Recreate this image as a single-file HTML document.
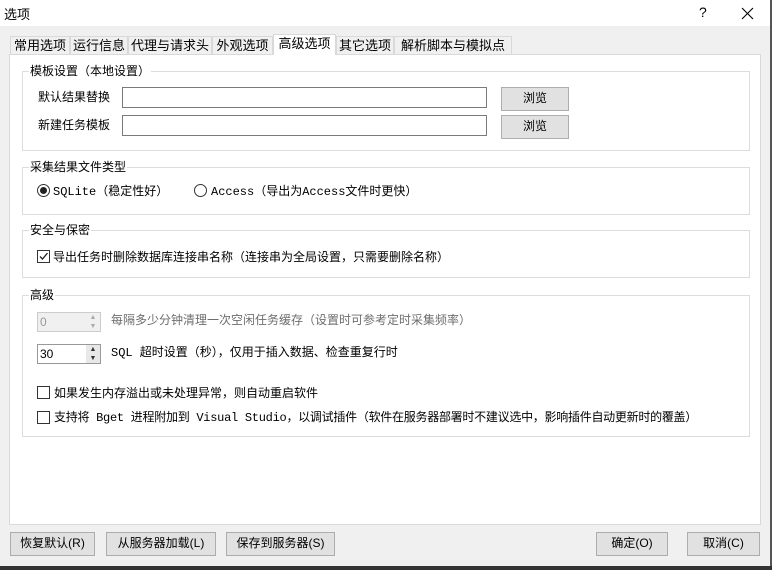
<!DOCTYPE html>
<html><head><meta charset="utf-8"><style>
*{box-sizing:border-box;margin:0;padding:0}
body{width:772px;height:570px;background:#f0f0f0;font-family:"Liberation Sans","Noto Sans CJK SC",sans-serif;font-size:12px;color:#000;position:relative;overflow:hidden}
.m{font-family:"Liberation Mono","Noto Sans CJK SC",monospace}
.a{position:absolute;white-space:nowrap}
.title{left:0;top:0;width:772px;height:26px;background:#fff}
.tab{position:absolute;top:36px;height:19px;border:1px solid #d9d9d9;border-bottom:none;background:#f0f0f0;font-size:13px;line-height:17px;text-align:center}
.tab.sel{top:34px;height:21px;background:#fff;z-index:2}
.panel{left:9px;top:54px;width:752px;height:471px;background:#fff;border:1px solid #d9d9d9}
.grp{position:absolute;border:1px solid #dcdcdc}
.lg{position:absolute;top:-9px;left:6px;background:#fff;padding:0 1px;line-height:16px;font-size:12px}
.inp{position:absolute;background:#fff;border:1px solid #7a7a7a}
.btn{position:absolute;background:#e1e1e1;border:1px solid #adadad;text-align:center;line-height:21px;font-size:12px}
.cb{position:absolute;width:13px;height:13px;border:1px solid #333;background:#fff}
</style></head><body>
<div class="a title"></div>
<div class="a" style="left:4px;top:4px;font-size:13px">选项</div>
<div class="a" style="left:699px;top:4px;font-size:14px">?</div>
<svg class="a" style="left:741px;top:7px" width="13" height="13"><path d="M1 1 L12 12 M12 1 L1 12" stroke="#000" stroke-width="1.1"/></svg>
<div class="a" style="left:770px;top:0;width:2px;height:570px;background:#555"></div>

<div class="tab" style="left:10px;width:60px">常用选项</div>
<div class="tab" style="left:70px;width:58px">运行信息</div>
<div class="tab" style="left:128px;width:84px">代理与请求头</div>
<div class="tab" style="left:212px;width:61px">外观选项</div>
<div class="tab sel" style="left:273px;width:63px">高级选项</div>
<div class="tab" style="left:336px;width:58px">其它选项</div>
<div class="tab" style="left:394px;width:118px">解析脚本与模拟点击</div>

<div class="a panel"></div>

<div class="grp" style="left:22px;top:71px;width:728px;height:80px"><div class="lg">模板设置（本地设置）</div></div>
<div class="a" style="left:38px;top:88px">默认结果替换</div>
<div class="inp" style="left:122px;top:87px;width:365px;height:21px"></div>
<div class="btn" style="left:501px;top:87px;width:68px;height:24px">浏览</div>
<div class="a" style="left:38px;top:116px">新建任务模板</div>
<div class="inp" style="left:122px;top:115px;width:365px;height:21px"></div>
<div class="btn" style="left:501px;top:115px;width:68px;height:24px">浏览</div>

<div class="grp" style="left:22px;top:167px;width:728px;height:48px"><div class="lg">采集结果文件类型</div></div>
<div class="a" style="left:37px;top:184px;width:13px;height:13px;border:1px solid #333;border-radius:50%;background:#fff"><div style="margin:2px;width:7px;height:7px;border-radius:50%;background:#222"></div></div>
<div class="a m" style="left:53px;top:182px">SQLite（稳定性好）</div>
<div class="a" style="left:194px;top:184px;width:13px;height:13px;border:1px solid #333;border-radius:50%;background:#fff"></div>
<div class="a m" style="left:211px;top:182px">Access（导出为Access文件时更快）</div>

<div class="grp" style="left:22px;top:230px;width:728px;height:48px"><div class="lg">安全与保密</div></div>
<div class="cb" style="left:37px;top:250px"><svg width="11" height="11" style="display:block"><path d="M2 5.5 L4.5 8 L9.5 2" stroke="#222" stroke-width="1.3" fill="none"/></svg></div>
<div class="a" style="left:53px;top:248px">导出任务时删除数据库连接串名称（连接串为全局设置，只需要删除名称）</div>

<div class="grp" style="left:22px;top:295px;width:728px;height:142px"><div class="lg">高级</div></div>
<div class="inp" style="left:37px;top:312px;width:64px;height:20px;background:#f0f0f0;border-color:#ccc;color:#999;padding-left:2px;line-height:18px">0</div>
<div class="a" style="left:86px;top:313px;width:14px;height:18px;font-size:7px;color:#aaa;line-height:9px;text-align:center">▲<br>▼</div>
<div class="a" style="left:111px;top:311px;color:#6d6d6d">每隔多少分钟清理一次空闲任务缓存（设置时可参考定时采集频率）</div>
<div class="inp" style="left:37px;top:344px;width:64px;height:20px;padding-left:2px;line-height:18px;border-color:#999">30</div>
<div class="a" style="left:86px;top:345px;width:14px;height:18px;font-size:7px;color:#333;line-height:9px;text-align:center;background:#e8e8e8">▲<br>▼</div>
<div class="a m" style="left:111px;top:343px">SQL 超时设置（秒），仅用于插入数据、检查重复行时</div>
<div class="cb" style="left:37px;top:386px"></div>
<div class="a" style="left:54px;top:384px">如果发生内存溢出或未处理异常，则自动重启软件</div>
<div class="cb" style="left:37px;top:411px"></div>
<div class="a m" style="left:54px;top:408px;letter-spacing:-0.27px">支持将 Bget 进程附加到 Visual Studio，以调试插件（软件在服务器部署时不建议选中，影响插件自动更新时的覆盖）</div>

<div class="btn" style="left:10px;top:532px;width:85px;height:24px">恢复默认(R)</div>
<div class="btn" style="left:106px;top:532px;width:110px;height:24px">从服务器加载(L)</div>
<div class="btn" style="left:226px;top:532px;width:109px;height:24px">保存到服务器(S)</div>
<div class="btn" style="left:596px;top:532px;width:72px;height:24px">确定(O)</div>
<div class="btn" style="left:687px;top:532px;width:73px;height:24px">取消(C)</div>
<div class="a" style="left:0;top:566px;width:772px;height:4px;background:#333"></div>
</body></html>
